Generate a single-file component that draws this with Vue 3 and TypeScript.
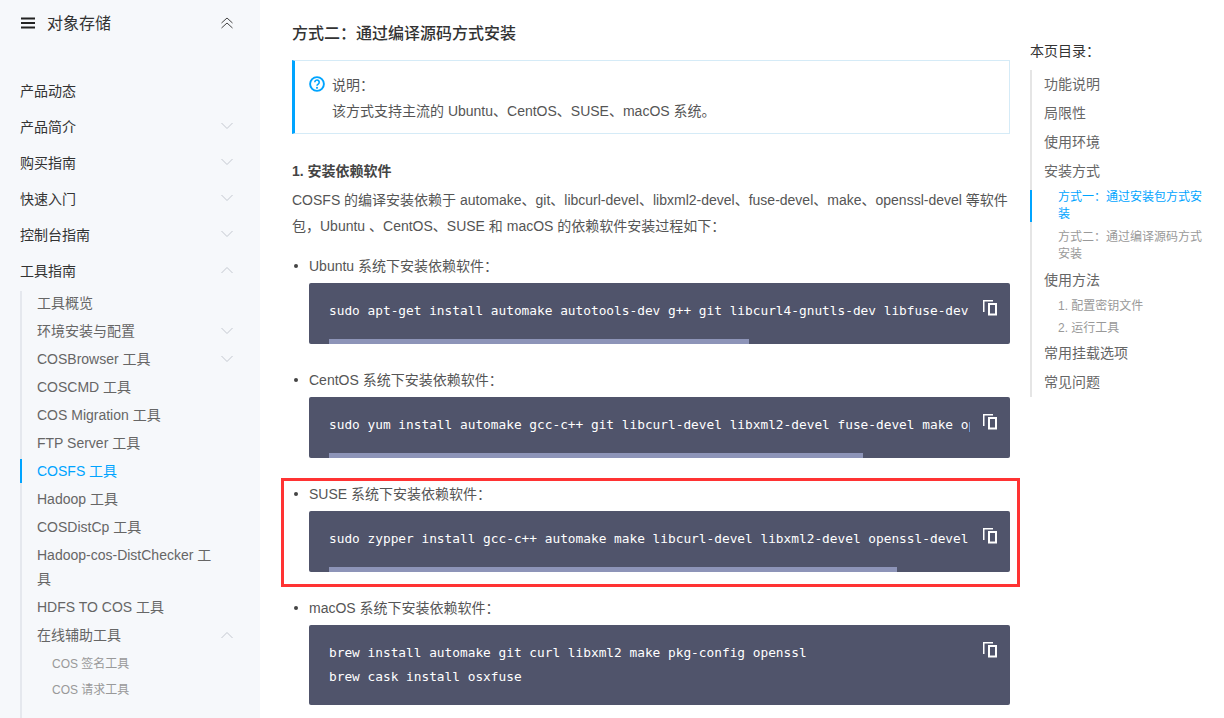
<template>
  <div class="page">
    <!-- 左侧导航 -->
    <aside class="sidebar">
      <div class="side-head">
        <svg class="menu-icon" width="14" height="12" viewBox="0 0 14 12">
          <path d="M0 1.5H14M0 6H14M0 10.5H14" stroke="#222" stroke-width="2" fill="none" />
        </svg>
        <span class="side-title">对象存储</span>
        <svg class="chev" width="14" height="12" viewBox="0 0 14 12" fill="none" stroke="#444" stroke-width="1">
          <path d="M1.5 6 7 1l5.5 5M1.5 11 7 6l5.5 5" />
        </svg>
      </div>

      <ul class="top-list">
        <li v-for="item in topItems" :key="item.label" class="top-row">
          <span>{{ item.label }}</span>
          <svg v-if="item.arrow" class="chev" width="14" height="8" viewBox="0 0 14 8" fill="none" stroke="#c4c8d0" stroke-width="1">
            <path :d="item.arrow === 'up' ? 'M1.5 7 7 1.5 12.5 7' : 'M1.5 1 7 6.5 12.5 1'" />
          </svg>
        </li>
      </ul>

      <ul class="child-list">
        <template v-for="child in childItems" :key="child.label">
          <li class="child-row" :class="{ active: child.active }">
            <span class="child-text">{{ child.label }}</span>
            <svg v-if="child.arrow" class="chev" width="14" height="8" viewBox="0 0 14 8" fill="none" stroke="#c4c8d0" stroke-width="1">
              <path :d="child.arrow === 'up' ? 'M1.5 7 7 1.5 12.5 7' : 'M1.5 1 7 6.5 12.5 1'" />
            </svg>
          </li>
        </template>
        <li class="sub-row first">COS 签名工具</li>
        <li class="sub-row">COS 请求工具</li>
        <li class="child-row last"><span class="child-text">在线调试工具</span></li>
      </ul>
    </aside>

    <!-- 正文 -->
    <main class="content">
      <h2 class="title">方式二：通过编译源码方式安装</h2>

      <div class="notice">
        <svg class="notice-icon" width="16" height="16" viewBox="0 0 16 16">
          <circle cx="8" cy="8" r="6.9" fill="none" stroke="#00a4ff" stroke-width="1.9" />
          <path d="M5.8 6.3a2.2 2.2 0 1 1 3.4 1.8c-.8.5-1.2.9-1.2 1.7" fill="none" stroke="#00a4ff" stroke-width="1.6" />
          <rect x="7.1" y="10.9" width="1.8" height="1.8" fill="#00a4ff" />
        </svg>
        <div>
          <p>说明：</p>
          <p>该方式支持主流的 Ubuntu、CentOS、SUSE、macOS 系统。</p>
        </div>
      </div>

      <h4 class="step">1. 安装依赖软件</h4>
      <p class="para">COSFS 的编译安装依赖于 automake、git、libcurl-devel、libxml2-devel、fuse-devel、make、openssl-devel 等软件包，Ubuntu 、CentOS、SUSE 和 macOS 的依赖软件安装过程如下：</p>

      <ul class="os-list">
        <li v-for="os in osBlocks" :key="os.name" class="os-item">
          <p class="os-label">{{ os.name }} 系统下安装依赖软件：</p>
          <div class="code">
            <pre class="code-text">{{ os.code }}</pre>
            <div v-if="os.thumb" class="track">
              <div class="thumb" :style="{ width: os.thumb + 'px' }"></div>
            </div>
            <svg class="copy" width="14" height="16" viewBox="0 0 14 16" fill="none" stroke="#fff">
              <path d="M.75 12V.75H10" stroke-width="1.5" />
              <rect x="6" y="4" width="7" height="10.5" stroke-width="2" />
            </svg>
          </div>
        </li>
      </ul>
    </main>

    <!-- 本页目录 -->
    <nav class="toc">
      <div class="toc-title">本页目录：</div>
      <ul class="toc-list">
        <li v-for="row in tocItems" :key="row.label" :class="[row.kind, { active: row.active }]">{{ row.label }}</li>
      </ul>
    </nav>

    <!-- 红框标注 -->
    <div class="mark"></div>
  </div>
</template>

<script setup lang="ts">
type Arrow = 'up' | 'down' | undefined;

const topItems: { label: string; arrow?: Arrow }[] = [
  { label: '产品动态' },
  { label: '产品简介', arrow: 'down' },
  { label: '购买指南', arrow: 'down' },
  { label: '快速入门', arrow: 'down' },
  { label: '控制台指南', arrow: 'down' },
  { label: '工具指南', arrow: 'up' }
];

const childItems: { label: string; arrow?: Arrow; active?: boolean }[] = [
  { label: '工具概览' },
  { label: '环境安装与配置', arrow: 'down' },
  { label: 'COSBrowser 工具', arrow: 'down' },
  { label: 'COSCMD 工具' },
  { label: 'COS Migration 工具' },
  { label: 'FTP Server 工具' },
  { label: 'COSFS 工具', active: true },
  { label: 'Hadoop 工具' },
  { label: 'COSDistCp 工具' },
  { label: 'Hadoop-cos-DistChecker 工具' },
  { label: 'HDFS TO COS 工具' },
  { label: '在线辅助工具', arrow: 'up' }
];

const osBlocks = [
  {
    name: 'Ubuntu',
    code: 'sudo apt-get install automake autotools-dev g++ git libcurl4-gnutls-dev libfuse-dev libssl-dev libxml2-dev make pkg-config',
    thumb: 420
  },
  {
    name: 'CentOS',
    code: 'sudo yum install automake gcc-c++ git libcurl-devel libxml2-devel fuse-devel make openssl-devel',
    thumb: 534
  },
  {
    name: 'SUSE',
    code: 'sudo zypper install gcc-c++ automake make libcurl-devel libxml2-devel openssl-devel',
    thumb: 568
  },
  {
    name: 'macOS',
    code: 'brew install automake git curl libxml2 make pkg-config openssl\nbrew cask install osxfuse',
    thumb: 0
  }
];

const tocItems: { label: string; kind: string; active?: boolean }[] = [
  { label: '功能说明', kind: 'lv1' },
  { label: '局限性', kind: 'lv1' },
  { label: '使用环境', kind: 'lv1' },
  { label: '安装方式', kind: 'lv1' },
  { label: '方式一：通过安装包方式安装', kind: 'lv2', active: true },
  { label: '方式二：通过编译源码方式安装', kind: 'lv2' },
  { label: '使用方法', kind: 'lv1' },
  { label: '1. 配置密钥文件', kind: 'lv3' },
  { label: '2. 运行工具', kind: 'lv3' },
  { label: '常用挂载选项', kind: 'lv1' },
  { label: '常见问题', kind: 'lv1' }
];
</script>

<style>
html,
body {
  margin: 0;
  background: #fff;
}
</style>

<style scoped>
ul,
p,
h2,
h4,
pre {
  margin: 0;
  padding: 0;
}

ul {
  list-style: none;
}

.page {
  position: relative;
  display: flex;
  height: 718px;
  overflow: hidden;
  font-family: "Liberation Sans", "Noto Sans CJK SC", sans-serif;
  font-size: 14px;
  color: #444;
}

.sidebar {
  flex: none;
  width: 260px;
  box-sizing: border-box;
  padding-left: 20px;
  background: #f6f8fb;
}

.side-head {
  display: flex;
  align-items: center;
  height: 46px;
  padding-left: 1px;
}

.side-title {
  flex: 1;
  margin-left: 12px;
  padding-top: 1px;
  font-size: 16px;
  line-height: 45px;
  color: #333;
}

.chev {
  flex: none;
  margin-right: 26px;
}

.top-list {
  margin-top: 26px;
}

.top-row {
  display: flex;
  align-items: center;
  justify-content: space-between;
  height: 36px;
  color: #333;
}

.child-list {
  position: relative;
  margin-top: 1px;
  padding-left: 17px;
}

.child-list::before {
  content: "";
  position: absolute;
  left: 0;
  top: 2px;
  bottom: 0;
  width: 2px;
  background: #e5e8ee;
}

.child-row {
  position: relative;
  display: flex;
  align-items: center;
  justify-content: space-between;
  padding: 2px 0;
  line-height: 24px;
  color: #666;
}

.child-row.last {
  margin-top: 9px;
}

.child-text {
  width: 177px;
}

.child-row.active {
  color: #00a4ff;
}

.child-row.active::before {
  content: "";
  position: absolute;
  left: -17px;
  top: 2px;
  bottom: 2px;
  width: 2px;
  background: #00a4ff;
}

.sub-row {
  height: 26px;
  padding-left: 15px;
  font-size: 12px;
  line-height: 26px;
  color: #999;
}

.sub-row.first {
  margin-top: 2px;
}

.content {
  flex: none;
  width: 718px;
  margin-left: 32px;
}

.title {
  margin-top: 22px;
  font-size: 16px;
  font-weight: 500;
  line-height: 24px;
  color: #333;
}

.notice {
  display: flex;
  box-sizing: border-box;
  height: 74px;
  margin-top: 14px;
  padding: 11px 16px 0 14px;
  border: 1px solid #d5ebf7;
  border-left: 3px solid #00a4ff;
  gap: 7px;
  line-height: 26px;
  color: #555;
}

.notice-icon {
  margin-top: 4px;
}

.step {
  margin-top: 24px;
  font-size: 14px;
  font-weight: 700;
  line-height: 26px;
  color: #444;
}

.para {
  margin-top: 3px;
  line-height: 26px;
  color: #555;
}

.os-list {
  margin-top: 14px;
}

.os-item {
  position: relative;
  margin-bottom: 23px;
  padding-left: 17px;
}

.os-item::before {
  content: "";
  position: absolute;
  left: 2px;
  top: 11px;
  width: 4px;
  height: 4px;
  border-radius: 50%;
  background: #444;
}

.os-label {
  line-height: 26px;
  color: #555;
}

.code {
  position: relative;
  margin-top: 4px;
  padding-left: 20px;
  border-radius: 2px;
  background: #50546b;
}

.code-text {
  width: 641px;
  overflow: hidden;
  padding: 16px 0;
  font-family: "DejaVu Sans Mono", monospace;
  font-size: 12.8px;
  line-height: 24px;
  color: #fff;
}

.track {
  height: 5px;
}

.thumb {
  height: 5px;
  background: #8d94b8;
}

.copy {
  position: absolute;
  right: 13px;
  top: 17px;
}

.toc {
  flex: none;
  width: 176px;
  margin-left: 20px;
}

.toc-title {
  margin-top: 39px;
  line-height: 24px;
  color: #333;
}

.toc-list {
  margin-top: 7px;
  padding-left: 12px;
  border-left: 2px solid #e5e5e5;
}

.lv1 {
  height: 29px;
  line-height: 29px;
  color: #666;
}

.lv2 {
  position: relative;
  width: 148px;
  padding: 3px 0 3px 14px;
  font-size: 12px;
  line-height: 17px;
  color: #999;
}

.lv2.active {
  color: #00a4ff;
}

.lv2.active::before {
  content: "";
  position: absolute;
  left: -14px;
  top: 4px;
  bottom: 4px;
  width: 2px;
  background: #00a4ff;
}

.lv3 {
  height: 22px;
  padding-left: 14px;
  font-size: 12px;
  line-height: 22px;
  color: #999;
}

.mark {
  position: absolute;
  left: 281px;
  top: 478px;
  width: 733px;
  height: 103px;
  border: 3px solid #f33;
}
</style>
